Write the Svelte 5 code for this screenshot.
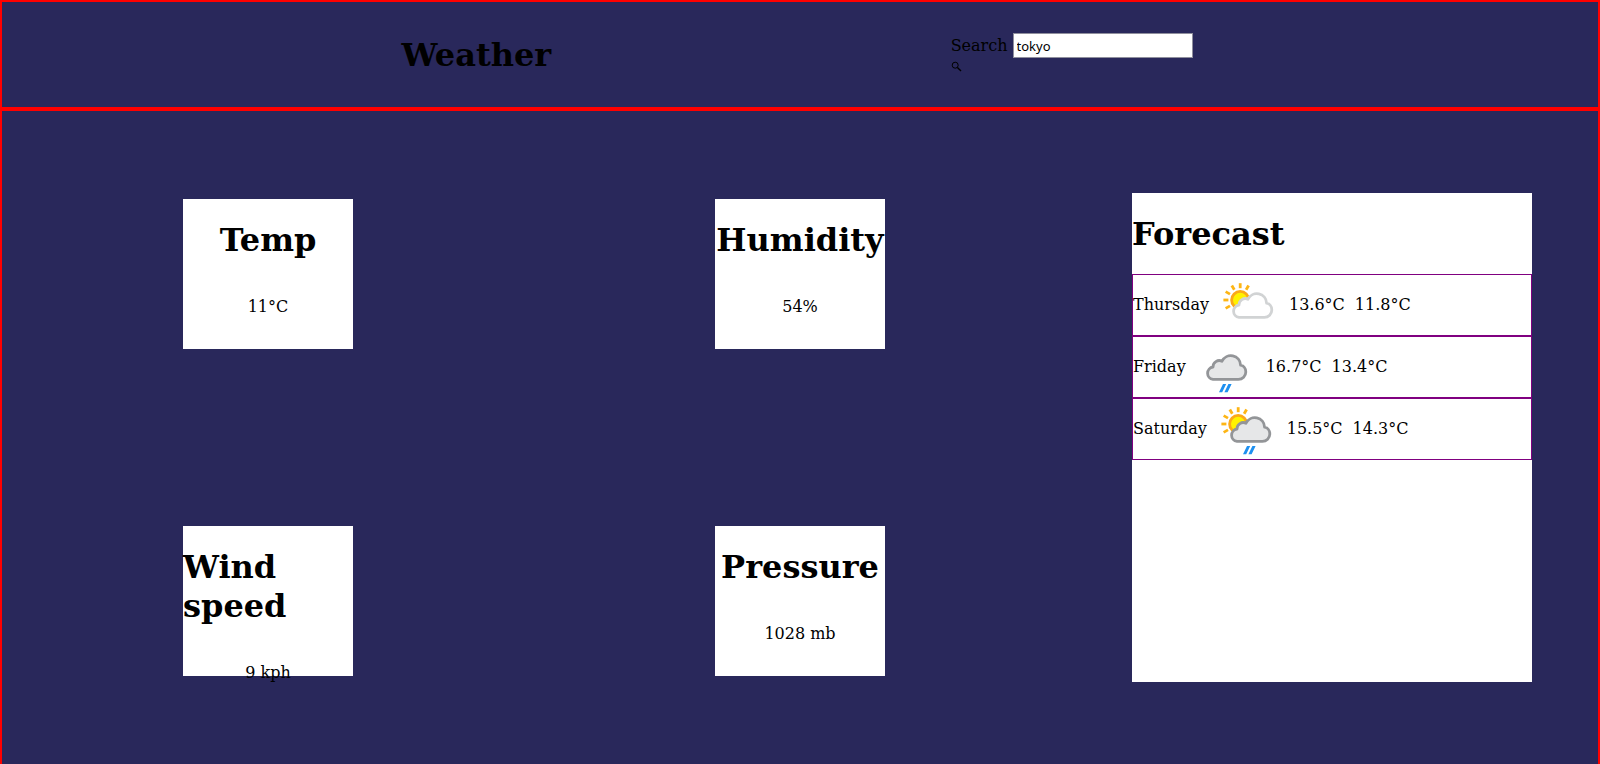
<script>
  let query = $state('tokyo');

  const readings = [
    { title: 'Temp', value: '11°C' },
    { title: 'Humidity', value: '54%' },
    { title: 'Wind speed', value: '9 kph' },
    { title: 'Pressure', value: '1028 mb' }
  ];

  const forecast = [
    { day: 'Thursday', high: '13.6°C', low: '11.8°C', sun: true, rain: false },
    { day: 'Friday', high: '16.7°C', low: '13.4°C', sun: false, rain: true },
    { day: 'Saturday', high: '15.5°C', low: '14.3°C', sun: true, rain: true }
  ];

  // Clockwise turns of the ray that points left
  const rays = [-30, 0, 30, 60, 90, 120];
</script>

{#snippet weatherIcon(sun, rain)}
  <svg class="weather" viewBox="0 0 64 60" aria-hidden="true">
    {#if sun}
      <g stroke="#fdb515" stroke-width="2.8">
        {#each rays as angle}
          <path d="M8.4 25H13.4" transform="rotate({angle} 25.2 25)" />
        {/each}
      </g>
      <circle cx="25.2" cy="25" r="8.6" fill="#fff200" stroke="#fba919" stroke-width="2.8" />
    {/if}
    <g transform={sun ? undefined : 'translate(-3 0)'}>
      <path
        d="M24 42.3H49.4C53.5 42.3 56.8 39 56.8 35S54 28.6 51.6 28.2A9.8 9.8 0 0 0 33 24.2A6.3 6.3 0 0 0 24 30A6.2 6.2 0 0 0 24 42.3Z"
        fill={rain ? '#e6e7e8' : '#fff'}
        stroke={rain ? '#939598' : '#d1d3d4'}
        stroke-width="2.8"
        stroke-linejoin="round"
      />
      {#if rain}
        <path d="M30 55.2L34 47H37.2L33.2 55.2ZM35.4 55.2L39.4 47H42.6L38.6 55.2Z" fill="#1e90f0" />
      {/if}
    </g>
  </svg>
{/snippet}

<div class="page">
  <header>
    <h1>Weather</h1>
    <form class="search" onsubmit={(e) => e.preventDefault()}>
      <div>
        <label for="city">Search</label>
        <input id="city" type="text" bind:value={query} />
      </div>
      <button type="submit" aria-label="Search">
        <svg viewBox="0 0 12 12" aria-hidden="true">
          <circle cx="4.2" cy="4.2" r="3" fill="none" stroke="#000" stroke-width="1" />
          <path d="M6.4 6.4L10 10" stroke="#000" stroke-width="1.4" />
        </svg>
      </button>
    </form>
  </header>

  <main>
    {#each readings as reading}
      <section class="card">
        <h1>{reading.title}</h1>
        <p>{reading.value}</p>
      </section>
    {/each}
    <section class="forecast">
      <h1>Forecast</h1>
      {#each forecast as item}
        <div class="day">
          <span class="name">{item.day}</span>
          {@render weatherIcon(item.sun, item.rain)}
          <span class="temp">{item.high}</span>
          <span class="temp">{item.low}</span>
        </div>
      {/each}
    </section>
  </main>
</div>

<style>
  :global(body) {
    margin: 0;
    background: #29285b;
  }
  .page {
    display: flex;
    flex-direction: column;
    min-height: 100vh;
    color: #000;
    font-family: 'DejaVu Serif', serif;
    font-size: 16px;
    line-height: 19px;
  }
  h1 {
    margin: 22px 0 20px;
    font-size: 32px;
    line-height: 39px;
  }
  header {
    display: flex;
    justify-content: space-evenly;
    align-items: center;
    padding: 12px 0;
    border: 2px solid red;
  }
  .search {
    display: flex;
    flex-direction: column;
    align-items: flex-start;
    padding-right: 6px;
  }
  .search div {
    display: flex;
    align-items: center;
    gap: 5px;
  }
  input {
    box-sizing: border-box;
    width: 180px;
    height: 25px;
    padding: 1px 3px;
    border: 1px solid #8f8f9d;
    background: #fff;
    color: #000;
    font-family: 'Noto Sans', sans-serif;
    font-size: 13px;
  }
  button {
    display: flex;
    padding: 3px 0;
    border: 0;
    background: none;
  }
  button svg {
    width: 12px;
    height: 12px;
  }
  main {
    flex: 1;
    display: grid;
    grid-template-columns: repeat(3, 1fr);
    grid-template-rows: repeat(2, 1fr);
    place-items: center;
    border: 2px solid red;
    border-bottom: 0;
  }
  .card {
    display: flex;
    flex-direction: column;
    align-items: center;
    width: 170px;
    height: 150px;
    background: #fff;
  }
  .card p {
    margin: 17px 0;
  }
  .forecast {
    grid-column: 3;
    grid-row: 1 / 3;
    display: flex;
    flex-direction: column;
    width: 25vw;
    height: 75%;
    background: #fff;
  }
  .day {
    display: flex;
    align-items: center;
    border: 1px solid purple;
  }
  .weather {
    width: 64px;
    height: 60px;
    margin-left: 6px;
  }
  .temp {
    margin-left: 10px;
  }
</style>
